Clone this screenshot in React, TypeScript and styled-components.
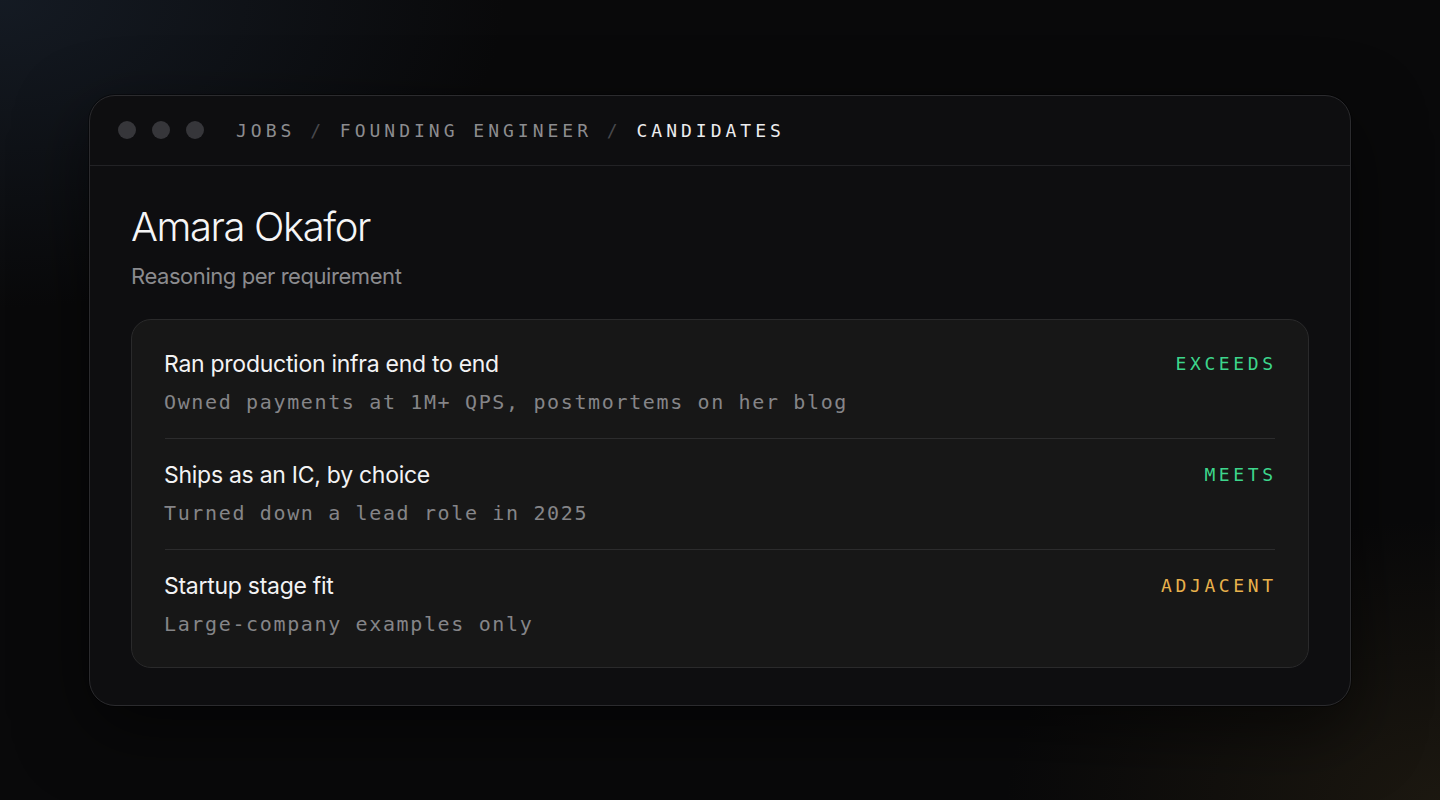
import React from "react";
import styled, { createGlobalStyle } from "styled-components";

const GlobalStyle = createGlobalStyle`
  * { box-sizing: border-box; }
  html, body { margin: 0; padding: 0; height: 100%; }
  body {
    background-color: #09090a;
    font-family: "Inter", "Noto Sans", sans-serif;
    -webkit-font-smoothing: antialiased;
  }
  #root { min-height: 100vh; }
`;

const Stage = styled.main`
  min-height: 100vh;
  display: flex;
  align-items: center;
  justify-content: center;
  background:
    radial-gradient(ellipse 720px 440px at 0% 0%, rgba(28, 38, 52, 0.6), rgba(28, 38, 52, 0) 70%),
    radial-gradient(ellipse 620px 400px at 100% 100%, rgba(46, 38, 22, 0.5), rgba(46, 38, 22, 0) 70%),
    #09090a;
`;

const Window = styled.section`
  width: 1262px;
  height: 611px;
  border-radius: 26px;
  border: 1px solid #2b2b2e;
  background: #0e0e10;
  box-shadow: 0 24px 70px rgba(0, 0, 0, 0.55), 0 0 0 1px rgba(0, 0, 0, 0.4);
  display: flex;
  flex-direction: column;
  overflow: hidden;
`;

const TitleBar = styled.header`
  height: 70px;
  flex: none;
  display: flex;
  align-items: center;
  padding: 0 28px;
  border-bottom: 1px solid #222225;
  gap: 32px;
`;

const Dots = styled.div`
  display: flex;
  gap: 16px;
`;

const Dot = styled.span`
  width: 18px;
  height: 18px;
  border-radius: 50%;
  background: #36363a;
`;

const Crumbs = styled.nav`
  font-family: "DejaVu Sans Mono", "Liberation Mono", monospace;
  font-size: 18px;
  letter-spacing: 0.222em;
  text-transform: uppercase;
  white-space: pre;
  color: #8c8c8f;
`;

const Sep = styled.span`
  color: #48484c;
`;

const Current = styled.span`
  color: #ececee;
`;

const Body = styled.div`
  padding: 37px 41px 0;
  display: flex;
  flex-direction: column;
`;

const Name = styled.h1`
  margin: 0;
  font-size: 40px;
  line-height: 48px;
  font-weight: 300;
  letter-spacing: -0.035em;
  color: #f5f5f6;
`;

const Sub = styled.p`
  margin: 10px 0 0;
  font-size: 22px;
  line-height: 31px;
  font-weight: 400;
  color: #8b8b8e;
  letter-spacing: -0.02em;
`;

const Card = styled.div`
  margin-top: 27px;
  background: #171717;
  border: 1px solid #2a2a2b;
  border-radius: 20px;
  padding: 8px 33px 7px;
`;

const Row = styled.div`
  display: flex;
  justify-content: space-between;
  align-items: flex-start;
  padding: 22px 0;
  & + & {
    border-top: 1px solid #2c2c2d;
  }
`;

const Info = styled.div`
  display: flex;
  flex-direction: column;
  gap: 10px;
`;

const Req = styled.div`
  font-size: 23px;
  line-height: 28px;
  color: #f3f3f4;
  letter-spacing: -0.012em;
  margin-left: -1px;
`;

const Evidence = styled.div`
  font-family: "DejaVu Sans Mono", "Liberation Mono", monospace;
  font-size: 20px;
  line-height: 28px;
  letter-spacing: 0.082em;
  color: #858588;
  margin-left: -1px;
`;

const Verdict = styled.span<{ $tone: "good" | "warn" }>`
  font-family: "DejaVu Sans Mono", "Liberation Mono", monospace;
  font-size: 18px;
  line-height: 28px;
  letter-spacing: 0.2em;
  margin-right: -1.6px;
  color: ${(p) => (p.$tone === "good" ? "#3dd68c" : "#e8b14c")};
`;

const rows: { req: string; ev: string; verdict: string; tone: "good" | "warn" }[] = [
  {
    req: "Ran production infra end to end",
    ev: "Owned payments at 1M+ QPS, postmortems on her blog",
    verdict: "EXCEEDS",
    tone: "good",
  },
  {
    req: "Ships as an IC, by choice",
    ev: "Turned down a lead role in 2025",
    verdict: "MEETS",
    tone: "good",
  },
  {
    req: "Startup stage fit",
    ev: "Large-company examples only",
    verdict: "ADJACENT",
    tone: "warn",
  },
];

export default function App() {
  return (
    <>
      <GlobalStyle />
      <Stage>
        <Window>
          <TitleBar>
            <Dots>
              <Dot />
              <Dot />
              <Dot />
            </Dots>
            <Crumbs>
              Jobs<Sep> / </Sep>Founding Engineer<Sep> / </Sep>
              <Current>Candidates</Current>
            </Crumbs>
          </TitleBar>
          <Body>
            <Name>Amara Okafor</Name>
            <Sub>Reasoning per requirement</Sub>
            <Card>
              {rows.map((r) => (
                <Row key={r.req}>
                  <Info>
                    <Req>{r.req}</Req>
                    <Evidence>{r.ev}</Evidence>
                  </Info>
                  <Verdict $tone={r.tone}>{r.verdict}</Verdict>
                </Row>
              ))}
            </Card>
          </Body>
        </Window>
      </Stage>
    </>
  );
}
